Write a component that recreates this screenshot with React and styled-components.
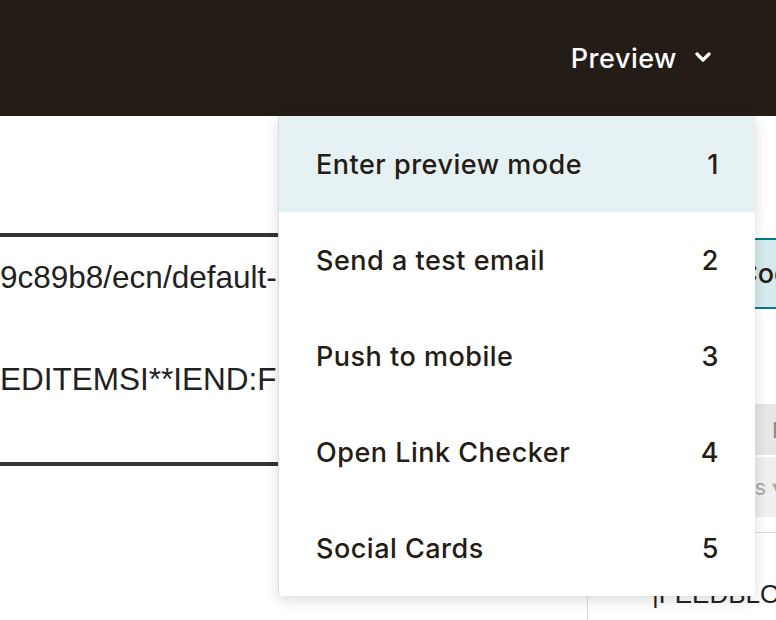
import React from "react";
import styled, { createGlobalStyle } from "styled-components";

const GlobalStyle = createGlobalStyle`
  html, body {
    margin: 0;
    padding: 0;
    background: #ffffff;
    overflow: hidden;
  }
  body {
    font-family: "Inter", "Noto Sans", sans-serif;
  }
`;

const Page = styled.div`
  width: 776px;
  height: 620px;
  overflow: hidden;
  display: flex;
  flex-direction: column;
`;

const Header = styled.header`
  height: 116px;
  flex-shrink: 0;
  background: #241c17;
  display: flex;
  justify-content: flex-end;
  align-items: stretch;
  padding-right: 21px;
  position: relative;
  z-index: 5;
`;

const PreviewWrap = styled.div`
  position: relative;
  width: 476px;
  display: flex;
  justify-content: flex-end;
  align-items: center;
`;

const PreviewButton = styled.button`
  border: none;
  background: transparent;
  color: #ffffff;
  font-family: "Inter", "Noto Sans", sans-serif;
  font-size: 27px;
  font-weight: 500;
  letter-spacing: 0.5px;
  display: flex;
  align-items: center;
  gap: 18px;
  padding: 0 44px 0 0;
  cursor: pointer;
`;

const Chevron = styled.svg`
  width: 16px;
  height: 12px;
  margin-top: -2px;
`;

const Menu = styled.ul`
  position: absolute;
  top: 100%;
  right: 0;
  width: 476px;
  margin: 0;
  padding: 0;
  list-style: none;
  background: #ffffff;
  border-left: 1px solid #dcdcdc;
  border-radius: 0 0 4px 4px;
  box-shadow: 0 4px 14px rgba(0, 0, 0, 0.14);
  overflow: hidden;
`;

const MenuItem = styled.li`
  height: 96px;
  display: flex;
  align-items: center;
  justify-content: space-between;
  padding: 0 36px 0 37px;
  background: ${(p) => (p.$active ? "#e6f1f3" : "#ffffff")};
  color: #241c15;
  font-size: 27px;
  font-weight: 500;
  letter-spacing: 0.5px;
`;

const Body = styled.div`
  flex: 1;
  display: grid;
  grid-template-columns: 587px 1fr;
`;

const Editor = styled.div`
  padding-top: 117px;
  overflow: hidden;
`;

const CodeBox = styled.div`
  border-top: 4px solid #333333;
  border-bottom: 4px solid #333333;
  height: 233px;
  padding-top: 15px;
  box-sizing: border-box;
  font-family: "Liberation Sans", Arial, sans-serif;
  font-size: 31.5px;
  line-height: 51px;
  color: #222222;
  white-space: pre;
  overflow: hidden;
`;

const Side = styled.aside`
  border-left: 1px solid #dcdcdc;
  padding-top: 122px;
  display: flex;
  flex-direction: column;
  overflow: hidden;
`;

const CodeTab = styled.div`
  height: 71px;
  box-sizing: border-box;
  margin-left: 150px;
  border-top: 2px solid #007c89;
  border-bottom: 2px solid #007c89;
  background: #d5eaec;
  display: flex;
  align-items: center;
  font-size: 27px;
  font-weight: 500;
  color: #241c15;
  white-space: nowrap;
`;

const GrayBar = styled.div`
  margin-top: ${(p) => p.$top}px;
  height: ${(p) => p.$h}px;
  background: ${(p) => p.$bg};
  display: flex;
  align-items: center;
  padding-left: ${(p) => p.$indent}px;
  font-size: 22px;
  color: ${(p) => p.$color};
  white-space: nowrap;
`;

const Divider = styled.div`
  margin-top: 15px;
  border-top: 1px solid #dcdcdc;
`;

const BlockText = styled.div`
  padding: 46px 0 0 54px;
  font-family: "Liberation Sans", Arial, sans-serif;
  font-size: 26px;
  color: #222222;
  white-space: nowrap;
`;

const items = [
  ["Enter preview mode", "1"],
  ["Send a test email", "2"],
  ["Push to mobile", "3"],
  ["Open Link Checker", "4"],
  ["Social Cards", "5"],
];

export default function App() {
  return (
    <Page>
      <GlobalStyle />
      <Header>
        <PreviewWrap>
          <PreviewButton>
            Preview
            <Chevron viewBox="0 0 16 12">
              <path
                d="M2 3 L8 9 L14 3"
                fill="none"
                stroke="#ffffff"
                strokeWidth="3.2"
                strokeLinecap="round"
                strokeLinejoin="round"
              />
            </Chevron>
          </PreviewButton>
          <Menu>
            {items.map(([label, key], i) => (
              <MenuItem key={key} $active={i === 0}>
                <span>{label}</span>
                <span>{key}</span>
              </MenuItem>
            ))}
          </Menu>
        </PreviewWrap>
      </Header>
      <Body>
        <Editor>
          <CodeBox>
            {"9c89b8/ecn/default- images/placeholder.png\n\nEDITEMSI**IEND:FEEDBLOCKS*|"}
          </CodeBox>
        </Editor>
        <Side>
          <CodeTab>Code</CodeTab>
          <GrayBar $top={95} $h={51} $bg="#e6e6e6" $color="#888888" $indent={184}>
            Insert
          </GrayBar>
          <GrayBar $top={2} $h={60} $bg="#efefef" $color="#aaaaaa" $indent={128}>
            Tags ▾
          </GrayBar>
          <Divider />
          <BlockText>*|FEEDBLOCKS|*</BlockText>
        </Side>
      </Body>
    </Page>
  );
}
